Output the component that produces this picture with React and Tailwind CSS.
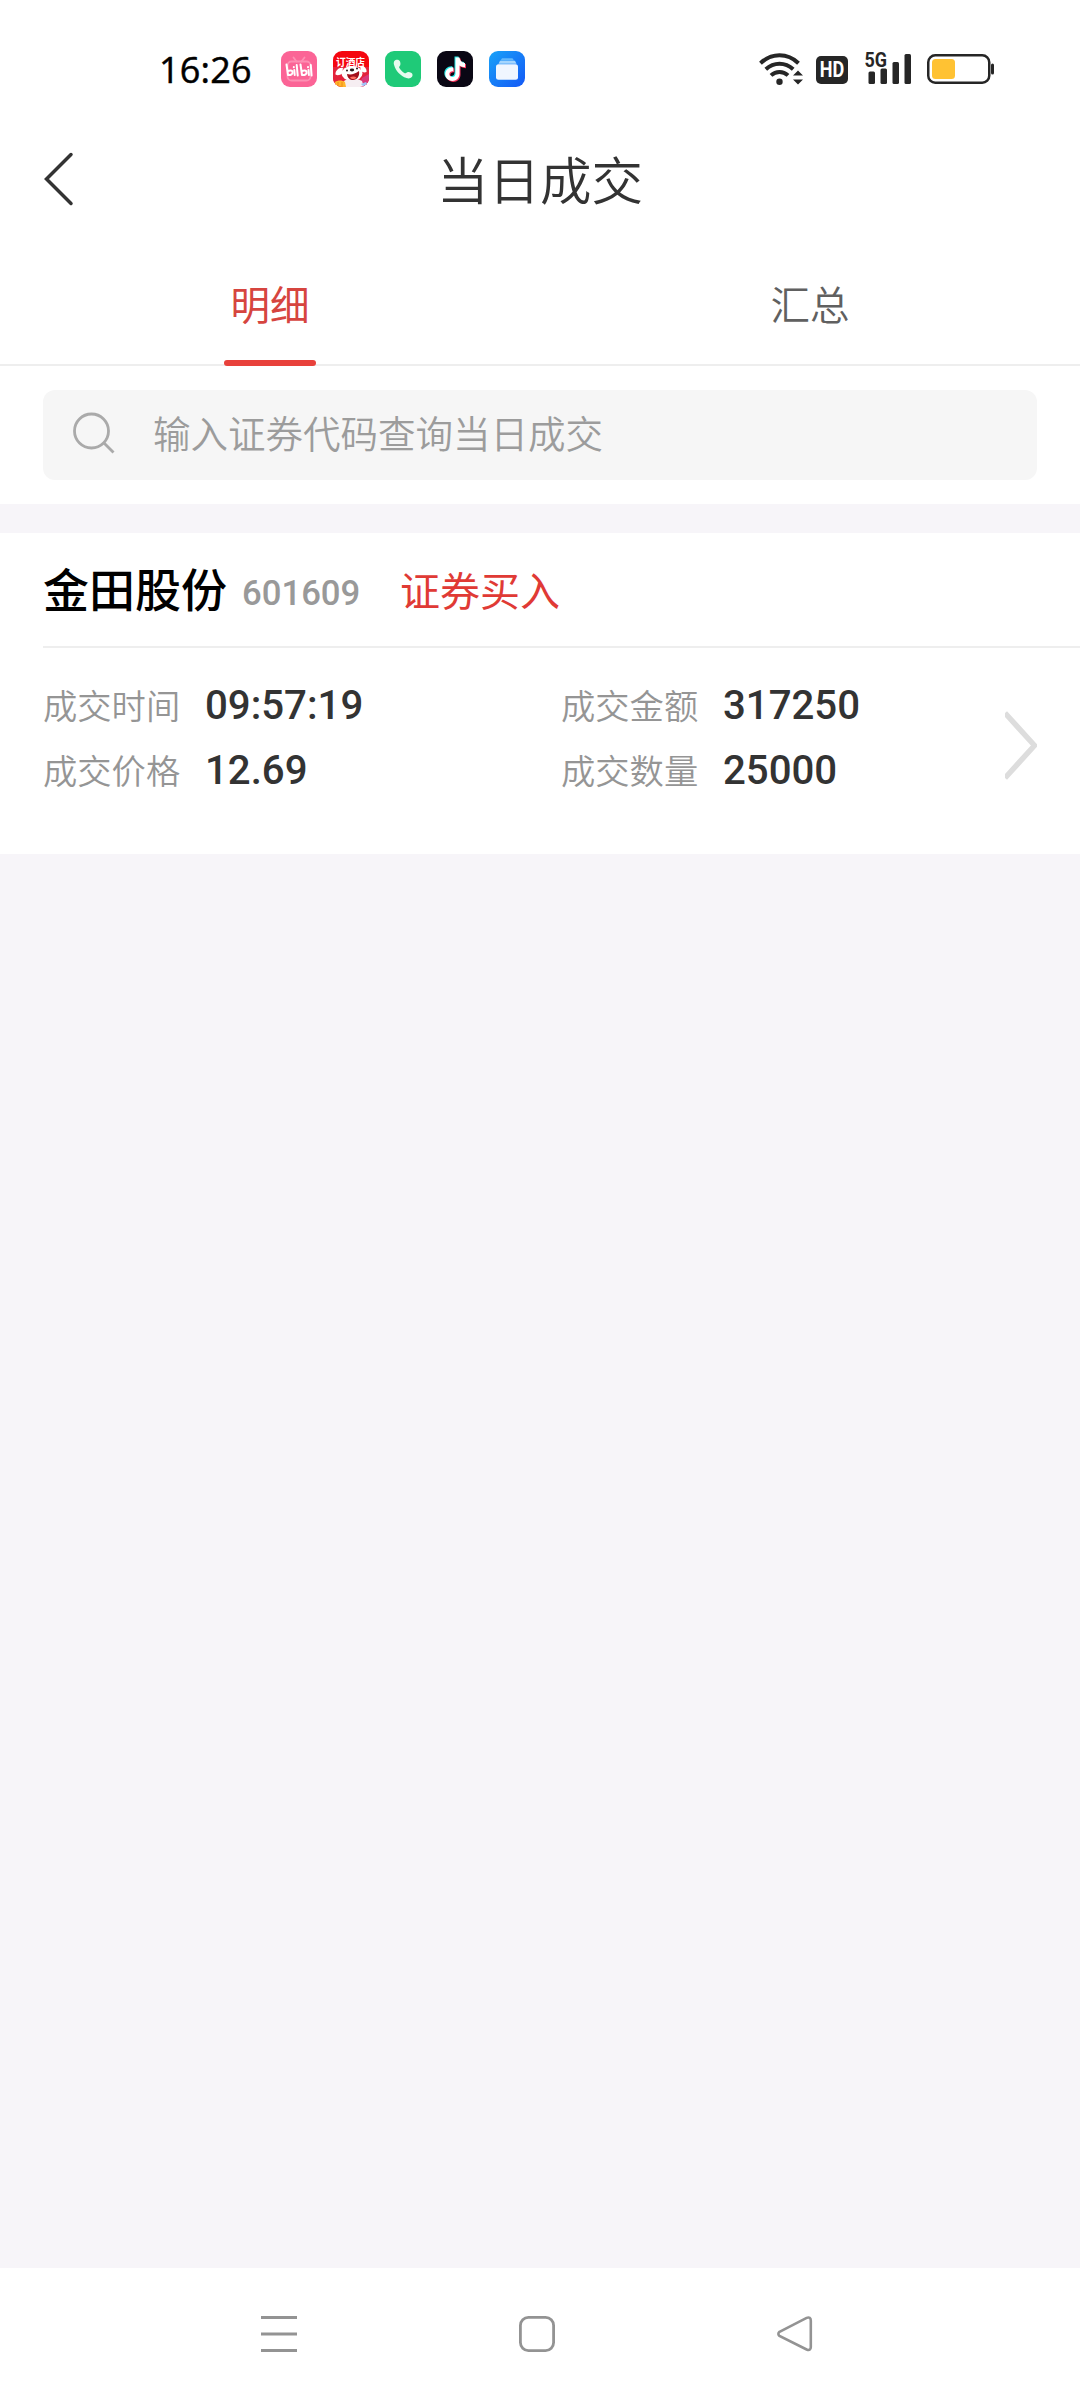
import React from "react";

const trade = {
  name: "金田股份",
  code: "601609",
  side: "证券买入",
  left: [
    { label: "成交时间", value: "09:57:19" },
    { label: "成交价格", value: "12.69" },
  ],
  right: [
    { label: "成交金额", value: "317250" },
    { label: "成交数量", value: "25000" },
  ],
};

function BiliIcon() {
  return (
    <svg width="36" height="36" viewBox="0 0 36 36">
      <rect width="36" height="36" rx="9" fill="#fb6496" />
      <g fill="none" stroke="#fd8fb3" strokeWidth="1.8" strokeLinecap="round">
        <rect x="6.5" y="10.5" width="23" height="19" rx="4" />
        <path d="M12.5 6.5l3 4M23.5 6.5l-3 4" />
      </g>
      <g fill="none" stroke="#fff" strokeWidth="2" strokeLinecap="round" strokeLinejoin="round">
        <path d="M5.5 13.5l1.500 10.500c3 .3 5-1 4.600-3-.3-1.600-2.500-1.800-4.500-1" />
        <path d="M13.3 19l.4 5M15.7 14l1 10.500M12.8 16v.2" />
        <path d="M19.5 13.500l1.500 10.500c3 .3 5-1 4.600-3-.3-1.600-2.500-1.800-4.500-1" />
        <path d="M27.5 19l.4 5M29.8 14l.8 10.500M27 16v.2" />
      </g>
    </svg>
  );
}

function HotelIcon() {
  return (
    <svg width="36" height="36" viewBox="0 0 36 36">
      <defs>
        <clipPath id="hotelClip"><rect width="36" height="36" rx="9" /></clipPath>
      </defs>
      <g clipPath="url(#hotelClip)">
        <rect width="36" height="36" fill="#f5060f" />
        <rect y="16" width="36" height="20" fill="#e3233c" />
        <path d="M26 36l3-9 7-4v13z" fill="#d9397a" />
        <path d="M10 17c-4-1-8 3-7.500 6.500 2 1.500 5 .5 6.500-1z" fill="#fff" />
        <path d="M27 15c3-1 7 2 6.500 6-2 1-4 .3-5.500-1z" fill="#fff" />
        <ellipse cx="19" cy="22.500" rx="10.500" ry="7.500" fill="#fff" />
        <path d="M11 30c4-3 13-3 18 0l2 6H10z" fill="#f6eef2" />
        <path d="M14 23c4 1 8 0 12-3 1 5-2 9-6 9-3 0-5.500-2-6-6z" fill="#a3101c" />
        <path d="M17 26.500c2-1.500 5-1.500 6.500 0-1.500 2-5 2-6.500 0z" fill="#ff6f61" />
        <ellipse cx="19" cy="19" rx="2.200" ry="1.400" fill="#2b1a1a" />
        <circle cx="14" cy="19.500" r="1" fill="#2b1a1a" />
        <circle cx="24" cy="17.500" r="1" fill="#2b1a1a" />
        <path d="M2 31c3-2 7-2 10 0l1 5H2z" fill="#ffb52e" />
        <path d="M5 31v5M9 31v5" stroke="#ef8d14" strokeWidth="1" />
        <path d="M28 33l5-2 2 3-4 2z" fill="#9fc3f7" />
        <text x="17.500" y="15" textAnchor="middle" fontSize="9.700" fontWeight="700" fill="#fff"
              fontFamily="'Noto Sans CJK SC', sans-serif">订酒店</text>
      </g>
    </svg>
  );
}

function PhoneIcon() {
  return (
    <svg width="36" height="36" viewBox="0 0 36 36">
      <rect width="36" height="36" rx="9" fill="#1fca78" />
      <path d="M10.200 9.300c1.800-1 4.200-.4 4.800 1.300.6 1.800.8 3.600-.4 4.700-.6.6-.6 1.100-.2 1.800 1.300 2.100 2.800 3.600 4.900 4.900.7.4 1.200.4 1.800-.1 1.300-1.200 3.300-1 5-.2 1.700.8 1.900 3 .7 4.400-1.300 1.500-3.300 1.700-5.300 1C15.500 25 10.700 20 9 13.800c-.5-1.800-.3-3.600 1.200-4.500z" fill="#e6fbef" />
    </svg>
  );
}

function TiktokIcon() {
  const note = "M18.500 6.500h4c.3 3.200 2.300 5.300 5.500 5.600v4.100c-2.100 0-4-.6-5.500-1.700v8.300c0 4.100-3.200 7.200-7.200 7.200s-7-3-7-6.900c0-4.300 3.600-7.300 8-6.900v4.200c-2.100-.5-4 .7-4 2.700 0 1.700 1.300 2.900 3 2.900 1.900 0 3.200-1.300 3.200-3.300z";
  return (
    <svg width="36" height="36" viewBox="0 0 36 36">
      <rect width="36" height="36" rx="9" fill="#0a0714" />
      <path d={note} fill="#25e9e6" transform="translate(-1 -1)" />
      <path d={note} fill="#f8325c" transform="translate(1 1)" />
      <path d={note} fill="#fff" />
    </svg>
  );
}

function FilesIcon() {
  return (
    <svg width="36" height="36" viewBox="0 0 36 36">
      <defs>
        <linearGradient id="filesBg" x1="0" y1="0" x2="1" y2="1">
          <stop offset="0" stopColor="#18a2f8" />
          <stop offset="1" stopColor="#1458f6" />
        </linearGradient>
      </defs>
      <rect width="36" height="36" rx="9" fill="url(#filesBg)" />
      <path d="M13 7.200h10.500l1.500 2.300H11.500z" fill="#63b8fb" />
      <path d="M11 9.800h15l1.500 3H9.500z" fill="#a5d5fd" />
      <rect x="7" y="13.300" width="22" height="15.500" rx="2.500" fill="#f0f6ff" />
    </svg>
  );
}

function WifiIcon() {
  return (
    <svg width="44" height="34" viewBox="0 0 44 34">
      <g fill="none" stroke="#262626" strokeWidth="4">
        <path d="M1.500 11.200C12.500 .6 28.500 .6 39.500 11.200" />
        <path d="M6.800 17.300c8-7.400 19.400-7.400 27.400 0" />
        <path d="M12 23.400c5-4.600 12-4.600 17 0" />
      </g>
      <circle cx="20.500" cy="29.700" r="3.200" fill="#262626" />
      <path d="M34 23.600l5-5.100 5 5.100zM34 27.400h10l-5 5.100z" fill="#262626" />
    </svg>
  );
}

function HdIcon() {
  return (
    <div className="flex h-7 w-8 items-center justify-center rounded-[5px] bg-[#262626]">
      <span className="scale-x-[0.82] font-[Roboto,sans-serif] text-[22px] font-bold leading-7 text-white">HD</span>
    </div>
  );
}

function SignalIcon() {
  return (
    <svg className="overflow-visible" width="48" height="34" viewBox="0 0 48 34">
      <text x="-0.500" y="17" fontSize="20" fontWeight="700" fill="#262626"
            textLength="22.500" lengthAdjust="spacingAndGlyphs" fontFamily="Roboto, sans-serif">5G</text>
      <g fill="#262626">
        <rect x="3.500" y="21.500" width="6.500" height="12.500" rx="1.500" />
        <rect x="15.500" y="18.500" width="6.500" height="15.500" rx="1.500" />
        <rect x="27.500" y="12" width="6.500" height="22" rx="1.500" />
        <rect x="39.500" y="4" width="6.500" height="30" rx="1.500" />
      </g>
    </svg>
  );
}

function BatteryIcon() {
  return (
    <svg width="68" height="30" viewBox="0 0 68 30">
      <rect x="1.250" y="1.250" width="61" height="27.500" rx="7" fill="none" stroke="#262626" strokeWidth="2.500" />
      <rect x="5" y="5" width="23" height="20" rx="3.500" fill="#ffc233" />
      <rect x="64" y="9.500" width="3" height="11" rx="1.500" fill="#262626" />
    </svg>
  );
}

function StatusBar() {
  return (
    <div className="flex h-[138px] items-center pl-[159px] pr-[85px]">
      <span className="w-[122px] pt-0.5 font-['Open_Sans',sans-serif] text-[36px] font-medium leading-none tracking-[0.2px] text-black [-webkit-text-stroke:0.5px_black]">16:26</span>
      <div className="flex gap-4">
        <BiliIcon />
        <HotelIcon />
        <PhoneIcon />
        <TiktokIcon />
        <FilesIcon />
      </div>
      <div className="ml-auto flex items-center">
        <div className="mr-[13px]"><WifiIcon /></div>
        <div className="mr-[17px] pt-0.5"><HdIcon /></div>
        <div className="mr-[14px] pb-1"><SignalIcon /></div>
        <BatteryIcon />
      </div>
    </div>
  );
}

function Field({ label, value }) {
  return (
    <div className="flex h-[65px] items-center">
      <span className="w-[162px] pb-[5px] text-[34.3px] font-[350] leading-none text-[#959595]">{label}</span>
      <span className="font-[Roboto,sans-serif] text-[40.2px] font-medium leading-none text-[#333]">{value}</span>
    </div>
  );
}

export default function App() {
  return (
    <div className="flex h-[2400px] w-[1080px] flex-col bg-[#f7f5f9] font-['Noto_Sans_CJK_SC',sans-serif]">
      <header className="bg-white">
        <StatusBar />

        {/* Title */}
        <div className="grid h-[86px] grid-cols-[120px_1fr_120px] items-center pb-[5px]">
          <svg className="ml-[43px]" width="32" height="54" viewBox="0 0 32 54">
            <path d="M28 2.500L3.500 27 28 51.500" fill="none" stroke="#333" strokeWidth="3.500" strokeLinecap="round" />
          </svg>
          <h1 className="pb-0.5 text-center text-[51.5px] font-[350] leading-none text-[#333]">当日成交</h1>
        </div>

        {/* Tabs */}
        <div className="grid h-[142px] grid-cols-2 border-b-2 border-[#eee] text-[39.5px] leading-none">
          <div className="-mb-0.5 flex flex-col items-center justify-between pt-[59px] text-[#d6453f]">
            明细
            <span className="h-1.5 w-[92px] rounded-full bg-[#e8413b]" />
          </div>
          <div className="pt-[59px] text-center font-[350] text-[#606060]">汇总</div>
        </div>

        {/* Search */}
        <div className="px-[43px] py-6">
          <div className="flex h-[90px] items-center rounded-xl bg-[#f6f6f6] pb-1 pl-[30px]">
            <svg width="43" height="42" viewBox="0 0 43 42" fill="none" stroke="#aaa" strokeWidth="2.800">
              <circle cx="18.500" cy="19" r="17" />
              <path d="M31 31l9.500 9.500" />
            </svg>
            <span className="ml-[37px] pb-0.5 text-[37.5px] font-[350] leading-none text-[#9c9c9c]">输入证券代码查询当日成交</span>
          </div>
        </div>
      </header>

      {/* Trade */}
      <section className="mt-[29px] h-[321px] bg-white pl-[43px]">
        <div className="flex h-[115px] items-center border-b-2 border-[#eee]">
          <span className="w-[199px] pb-1.5 text-[46px] font-medium leading-none text-black">{trade.name}</span>
          <span className="w-[158px] pt-[7px] font-[Roboto,sans-serif] text-[34.7px] font-medium leading-none text-[#999]">{trade.code}</span>
          <span className="pb-px text-[40px] leading-none text-[#e03a35]">{trade.side}</span>
        </div>
        <div className="flex pt-[26px]">
          <div className="w-[518px]">
            {trade.left.map((f) => <Field key={f.label} {...f} />)}
          </div>
          <div className="w-[444px]">
            {trade.right.map((f) => <Field key={f.label} {...f} />)}
          </div>
          <svg className="mt-[37px]" width="32" height="69" viewBox="0 0 32 69">
            <path d="M0 2L29.500 34.500 0 67" fill="none" stroke="#ddd" strokeWidth="5.500" />
          </svg>
        </div>
      </section>

      {/* System navigation */}
      <nav className="mt-auto flex h-[132px] items-center gap-[222px] bg-white pl-[261px]">
        <svg width="36" height="36" viewBox="0 0 36 36" stroke="#939393" strokeWidth="3">
          <path d="M0 1.500h36M0 18h36M0 34.500h36" />
        </svg>
        <svg width="36" height="36" viewBox="0 0 36 36" fill="none" stroke="#939393" strokeWidth="2.800">
          <rect x="1.400" y="1.400" width="33.200" height="33.200" rx="8" />
        </svg>
        <svg width="36" height="36" viewBox="0 0 36 36" fill="none" stroke="#939393" strokeWidth="2.600">
          <path d="M2.500 15.800L29.600 1.900q4.200-1.500 4.200 2.600v26.500q0 4.200-4.200 2.500L2.500 20q-2.300-2.100 0-4.200z" />
        </svg>
      </nav>
    </div>
  );
}
